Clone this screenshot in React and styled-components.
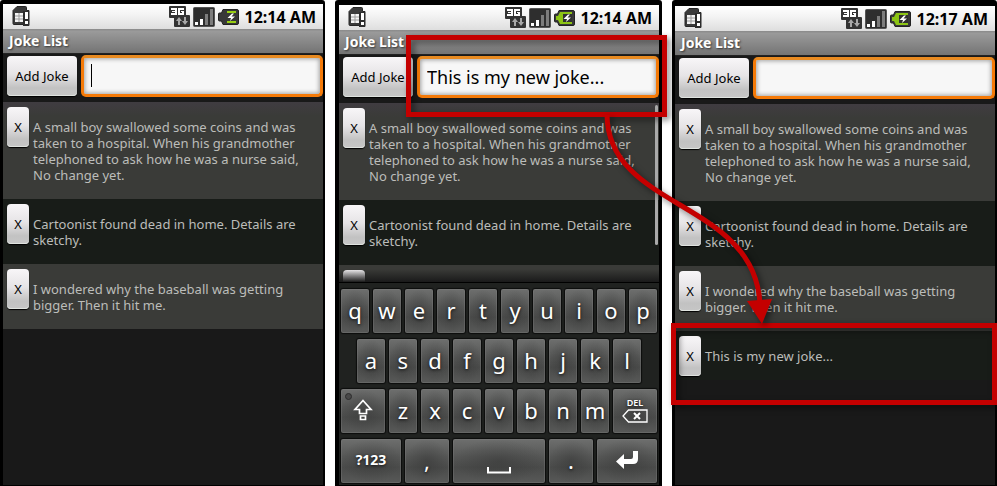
import React, { useState } from "react";
import styled, { createGlobalStyle } from "styled-components";

const GlobalStyle = createGlobalStyle`
  *, *::before, *::after { box-sizing: border-box; }
  body {
    margin: 0;
    background: #fff;
    font-family: "Noto Sans", "Open Sans", sans-serif;
    overflow-x: hidden;
  }
  button, input { font: inherit; margin: 0; padding: 0; border: 0; }
`;

const RED = "#c40000";

const Stage = styled.main`
  display: grid;
  grid-template-columns: 325fr 327fr 325fr;
  gap: 10px;
  min-height: 100vh;
`;

const Phone = styled.section`
  position: relative;
  display: flex;
  flex-direction: column;
  min-width: 0;
  background: #191919;
  border: solid #000;
  border-width: ${(p) => p.$frame};
  border-radius: 3px 3px 0 0;
`;

const StatusBar = styled.header`
  display: flex;
  align-items: center;
  gap: 3px;
  height: 25px;
  padding: 0 7px 0 9px;
  background: linear-gradient(#fff, #f4f4f4 40%, #dedede);
`;

const Clock = styled.time`
  margin-left: 3px;
  font-size: 16px;
  line-height: 24px;
  font-weight: 700;
  color: #000;
  white-space: nowrap;
`;

const Spacer = styled.span`
  flex: 1;
`;

const TitleBar = styled.h1`
  margin: 0;
  height: 25px;
  padding: 0 6px;
  font-size: 14px;
  line-height: 24px;
  font-weight: 700;
  color: #fff;
  text-shadow: 1px 1px 2px #333;
  background: linear-gradient(#8a8a8a, #9a9a9a 10%, #747474);
  border-bottom: 1px solid #222;
`;

const AddForm = styled.form`
  display: flex;
  gap: 4px;
  height: 48px;
  padding: 1px 0 5px 4px;
`;

const buttonFace = `
  color: #000;
  border-radius: 4px;
  background: linear-gradient(#f8f6f8, #e6e4e6 45%, #c2c2c2 80%, #c6c6c6);
  box-shadow: inset 0 -1px 0 #dfe3df, 0 1px 1px #000;
`;

const AddButton = styled.button`
  ${buttonFace}
  width: 70px;
  margin: 1px 0;
  font-size: 13px;
  white-space: nowrap;
`;

const Field = styled.label`
  position: relative;
  flex: 1;
  min-width: 0;
  display: flex;
`;

const JokeInput = styled.input`
  width: 100%;
  min-width: 0;
  padding: 0 7px;
  font-size: 18px;
  color: #000;
  outline: none;
  border: 3px solid #f57a08;
  border-top-color: #e88a20;
  border-radius: 5px;
  background: #f7f7f7;
  box-shadow: inset 0 0 4px 1px #a0a0a0;
`;

const Caret = styled.span`
  position: absolute;
  left: 10px;
  top: 9px;
  width: 1px;
  height: 23px;
  background: #000;
`;

const JokeList = styled.ul`
  position: relative;
  margin: 0;
  padding: 0;
  list-style: none;
  overflow: hidden;
`;

const JokeRow = styled.li`
  display: flex;
  align-items: flex-start;
  gap: 4px;
  padding: 0 8px 0 4px;
  background: #3a3b38;
  &:first-child { background: linear-gradient(#403c41, #3a3b38 14px); }
  &:nth-child(even) { background: #181c18; }
`;

const PeekRow = styled(JokeRow)`
  position: relative;
  height: 18px;
  overflow: hidden;
  &::after {
    content: "";
    position: absolute;
    inset: auto 0 0;
    height: 14px;
    background: linear-gradient(rgba(24, 24, 24, 0), #1a1a1a);
    border-bottom: 1px solid #000;
  }
`;

const RemoveButton = styled.button`
  ${buttonFace}
  flex: none;
  width: 22px;
  height: 40px;
  margin-top: 5px;
  font-size: 13px;
`;

const JokeText = styled.p`
  margin: 0;
  padding: 17px 0 16px;
  font-size: 13px;
  line-height: 16px;
  color: #bcbdba;
`;

const ScrollThumb = styled.li`
  position: absolute;
  right: 1px;
  top: 2px;
  width: 3px;
  height: 140px;
  border-radius: 2px;
  background: #a9a9a9;
`;

const Keyboard = styled.div`
  display: flex;
  flex-direction: column;
  flex: 1;
  gap: 6px;
  padding: 6px 2px 2px;
  background: #202220;
`;

const KeyRow = styled.div`
  display: flex;
  gap: 4px;
  padding: 0 ${(p) => (p.$inset ? "5%" : "0")};
`;

const Key = styled.button`
  position: relative;
  display: flex;
  align-items: center;
  justify-content: center;
  flex: ${(p) => p.$span || 28} 1 0;
  min-width: 0;
  height: 44px;
  padding-bottom: 2px;
  color: #fff;
  font-size: ${(p) => (p.$small ? "14px" : "22px")};
  font-weight: ${(p) => (p.$small ? 700 : 400)};
  line-height: 28px;
  text-shadow: 0 1px 3px #111;
  border-radius: 2px;
  background: radial-gradient(ellipse at 50% 50%, rgba(40, 40, 40, 0.35), rgba(40, 40, 40, 0) 70%),
    linear-gradient(#6e6f6e, #565756 40%, #4a4b4a 65%, #585958);
  box-shadow: inset 0 0 0 1px rgba(130, 130, 130, 0.35), 0 0 1px 1px #0c0d0c;
`;

const Callout = styled.div`
  position: absolute;
  z-index: 2;
  height: 82px;
  border: 5px solid ${RED};
  pointer-events: none;
  filter: drop-shadow(3px 3px 3px rgba(0, 0, 0, 0.5));
`;

const InputCallout = styled(Callout)`
  left: 67px;
  right: -8px;
  top: 30px;
`;

const RowCallout = styled(Callout)`
  left: -4px;
  right: -2px;
  top: 317px;
`;

const Arrow = styled.svg`
  position: absolute;
  z-index: 3;
  left: -75px;
  top: 107px;
  overflow: visible;
  pointer-events: none;
  filter: drop-shadow(3px 3px 3px rgba(0, 0, 0, 0.5));
`;

const SimIcon = () => (
  <svg width="18" height="21" viewBox="0 0 18 21" aria-label="SIM alert">
    <path d="M5 .5h8.500q1 0 1 1v3h2.500v15h-4.500v-1H2q-1 0-1-1V4.500z" fill="#3b3b3b" stroke="#262626" />
    <path d="M3 7h8v9H3z" fill="#f4f4f4" />
    <path d="M3 10h8M3 13h8M7 7v9" stroke="#9a9a9a" />
    <path d="M11 5h6v15h-6z" fill="#2c2c2c" />
    <path d="M13 6h3v7h-3zM13 15h3v3h-3z" fill="#fff" />
  </svg>
);

const DataIcon = () => (
  <svg width="21" height="21" viewBox="0 0 21 21" aria-label="3G data">
    <path d="M1 0h15q1 0 1 1v8h3q1 0 1 1v10q0 1-1 1H6q-1 0-1-1v-8H1q-1 0-1-1V1q0-1 1-1z" fill="#333" />
    <path d="M2 2h6v7H2V7h4V6H3V5h3V4H2z" fill="#fff" />
    <path d="M9 2h6v2h-4v3h2V6h-1V5h3v4H9z" fill="#fff" />
    <path d="M7 15l3-4 3 4h-2v4H9v-4zM13 15h2v-4h2v4h2l-3 4z" fill="#a8a8a8" />
  </svg>
);

const SignalIcon = () => (
  <svg width="22" height="20" viewBox="0 0 22 20" aria-label="Signal">
    <rect x=".5" y=".5" width="21" height="19" rx="1" fill="#2e2e2e" stroke="#555" />
    <path d="M2 15h3v3H2zM7 12h3v6H7z" fill="#fff" />
    <path d="M12 7h3v11h-3zM17 2h3v16h-3z" fill="#7c7c7c" />
  </svg>
);

const BatteryIcon = ({ full }) => (
  <svg width="21" height="16" viewBox="0 0 21 16" aria-label="Charging">
    <path d="M5 .5h14q1.500 0 1.500 1.500v12q0 1.500-1.500 1.500H5L3.500 12H1.500q-1 0-1-1V5q0-1 1-1h2z" fill="#383838" stroke="#222" />
    {full && <path d="M6 2h12v12H6l-2-4H2V6h2z" fill="#8cc414" />}
    {!full && <path d="M9 3h9M9 13h9" stroke="#98cf13" strokeWidth="2" />}
    {full && <path d="M9 4h9v8H9z" fill="#303030" />}
    <path d="M14 4.500L9.500 9H13l-1 3 5-4.500h-3.500l2.500-3z" fill="#fff" />
  </svg>
);

const ShiftIcon = () => (
  <svg width="20" height="22" viewBox="0 0 20 22" aria-hidden="true">
    <path d="M10 1.500l8 9h-4.500v4h-7v-4H2zM7.500 17h5v3.500h-5z" fill="none" stroke="#fff" strokeWidth="1.700" />
  </svg>
);

const ShiftLight = styled.span`
  position: absolute;
  left: 4px;
  top: 4px;
  width: 7px;
  height: 7px;
  border: 1px solid #2c2c2c;
  border-radius: 50%;
  background: #484848;
`;

const DeleteFace = styled.span`
  display: flex;
  flex-direction: column;
  align-items: center;
  font-size: 9px;
  line-height: 12px;
  font-weight: 600;
`;

const DeleteIcon = () => (
  <svg width="26" height="14" viewBox="0 0 26 14" aria-hidden="true">
    <path d="M6.500 1H25v12H6.500L1 7z" fill="none" stroke="#fff" strokeWidth="1.300" />
    <path d="M12 4l6 6M18 4l-6 6" stroke="#fff" strokeWidth="2" />
  </svg>
);

const SpaceFace = styled.svg`
  margin-top: 20px;
`;

const SpaceIcon = () => (
  <SpaceFace width="24" height="7" viewBox="0 0 24 7" aria-hidden="true">
    <path d="M1 0v5.500h22V0" fill="none" stroke="#fff" strokeWidth="2" />
  </SpaceFace>
);

const EnterIcon = () => (
  <svg width="24" height="20" viewBox="0 0 24 20" aria-hidden="true">
    <path d="M18 1h5v8q0 5-5 5H9v5L1 11.500 9 4v5h7q2 0 2-2z" fill="#fff" />
  </svg>
);

const JOKES = [
  "A small boy swallowed some coins and was taken to a hospital. When his grandmother telephoned to ask how he was a nurse said, No change yet.",
  "Cartoonist found dead in home. Details are sketchy.",
  "I wondered why the baseball was getting bigger. Then it hit me.",
];
const NEW_JOKE = "This is my new joke...";

function JokeScreen({ frame, time, draft = "", jokes, caret, full, typing, children }) {
  const [text, setText] = useState(draft);
  return (
    <Phone $frame={frame}>
      <StatusBar>
        <SimIcon />
        <Spacer />
        <DataIcon />
        <SignalIcon />
        <BatteryIcon full={full} />
        <Clock>{time}</Clock>
      </StatusBar>
      <TitleBar>Joke List</TitleBar>
      <AddForm onSubmit={(e) => e.preventDefault()}>
        <AddButton type="submit">Add Joke</AddButton>
        <Field>
          <JokeInput aria-label="New joke" value={text} onChange={(e) => setText(e.target.value)} />
          {caret && !text && <Caret />}
        </Field>
      </AddForm>
      <JokeList>
        {jokes.map((joke) => (
          <JokeRow key={joke}>
            <RemoveButton type="button">X</RemoveButton>
            <JokeText>{joke}</JokeText>
          </JokeRow>
        ))}
        {typing && (
          <PeekRow>
            <RemoveButton type="button" aria-label="Remove joke" />
          </PeekRow>
        )}
        {typing && <ScrollThumb aria-hidden="true" />}
      </JokeList>
      {typing && <SoftKeyboard />}
      {children}
    </Phone>
  );
}

const letters = (s) => [...s].map((c) => <Key type="button" key={c}>{c}</Key>);

function SoftKeyboard() {
  return (
    <Keyboard>
      <KeyRow>{letters("qwertyuiop")}</KeyRow>
      <KeyRow $inset>{letters("asdfghjkl")}</KeyRow>
      <KeyRow>
        <Key type="button" $span={44} aria-label="Shift">
          <ShiftLight />
          <ShiftIcon />
        </Key>
        {letters("zxcvbnm")}
        <Key type="button" $span={44} $small>
          <DeleteFace>
            DEL
            <DeleteIcon />
          </DeleteFace>
        </Key>
      </KeyRow>
      <KeyRow>
        <Key type="button" $span={60} $small>?123</Key>
        <Key type="button" $span={44}>,</Key>
        <Key type="button" $span={92} aria-label="Space"><SpaceIcon /></Key>
        <Key type="button" $span={44}>.</Key>
        <Key type="button" $span={60} aria-label="Enter"><EnterIcon /></Key>
      </KeyRow>
    </Keyboard>
  );
}

export default function App() {
  return (
    <>
      <GlobalStyle />
      <Stage>
        <JokeScreen frame="4px 2px 1px 3px" time="12:14 AM" jokes={JOKES} caret />
        <JokeScreen frame="5px 3px 1px 4px" time="12:14 AM" jokes={JOKES.slice(0, 2)} draft={NEW_JOKE} full typing>
          <InputCallout />
        </JokeScreen>
        <JokeScreen frame="6px 2px 1px 3px" time="12:17 AM" jokes={[...JOKES, NEW_JOKE]} full>
          <RowCallout />
          <Arrow width="180" height="212" viewBox="600 113 180 212" aria-hidden="true">
            <path d="M607 115C608 210 755 200 760 304" fill="none" stroke={RED} strokeWidth="5" />
            <path d="M747 301L772 299L762 324z" fill={RED} />
          </Arrow>
        </JokeScreen>
      </Stage>
    </>
  );
}
